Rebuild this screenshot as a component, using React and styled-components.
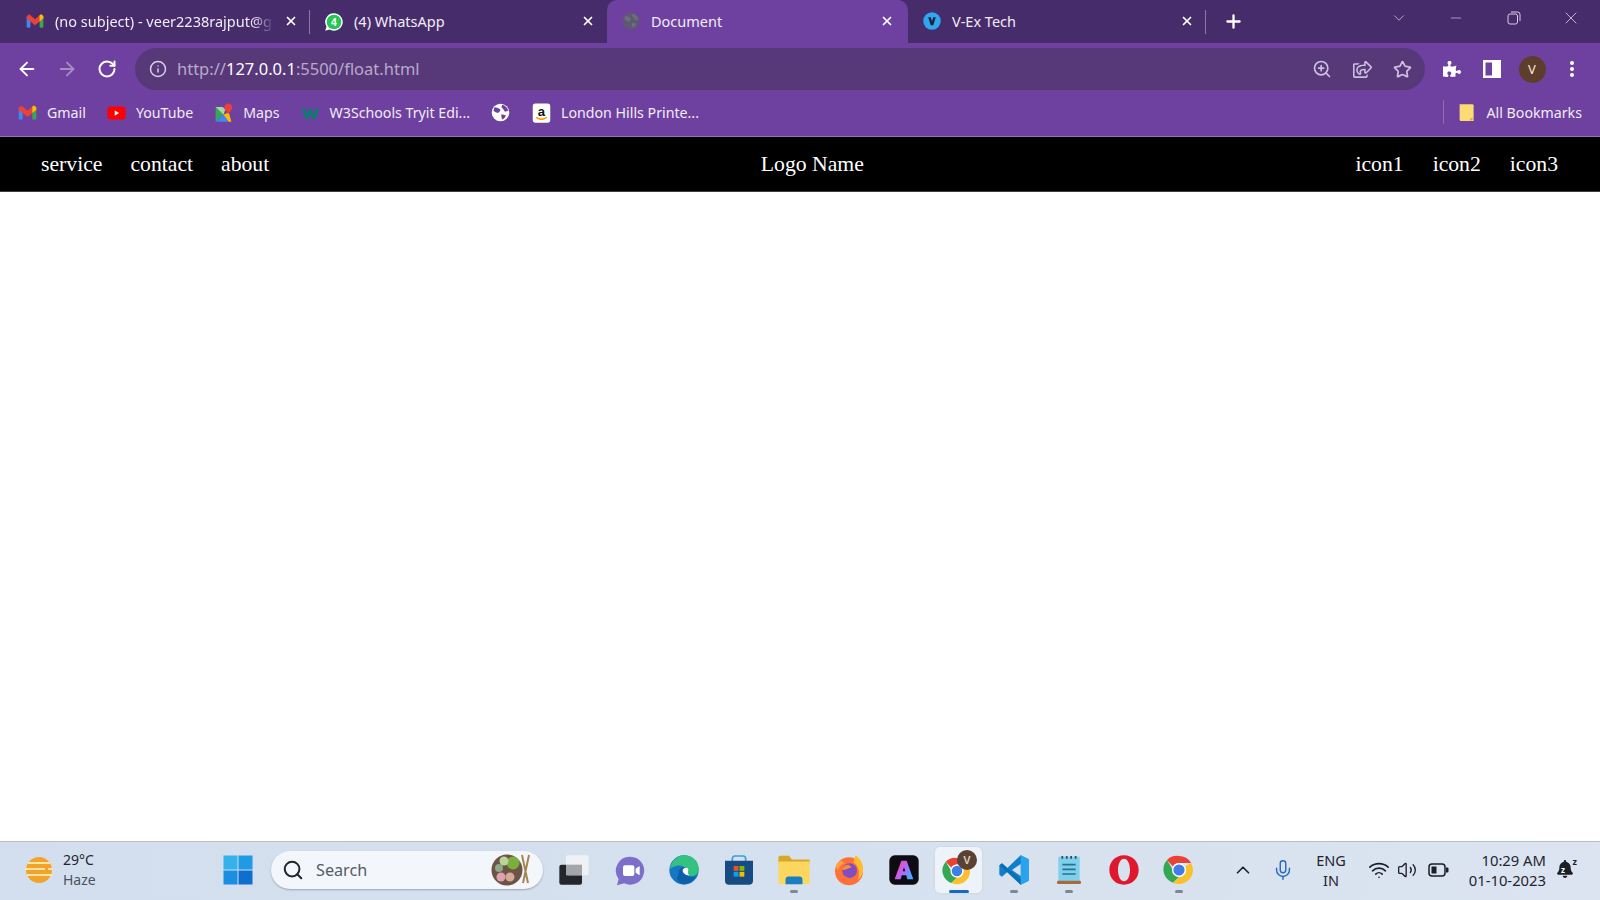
import React from 'react'
import styled, { createGlobalStyle } from 'styled-components'
import { ArrowLeft, ArrowRight, RotateCw, Info, ZoomIn, Star, Plus, X, Minus, ChevronDown, ChevronUp, Search, Mic, Wifi, Volume2 } from 'lucide-react'
import { FaPuzzlePiece, FaRegShareSquare, FaBell } from 'react-icons/fa'

const GlobalStyle = createGlobalStyle`
  html, body { margin: 0; padding: 0; background: #fff; }
  body { font-family: "Noto Sans", "Liberation Sans", sans-serif; }
`

const Screen = styled.div`
  width: 1600px;
  height: 900px;
  display: flex;
  flex-direction: column;
  overflow: hidden;
`

/* browser chrome */
const TabStrip = styled.div`
  height: 43px;
  background: #472c6b;
  display: flex;
  align-items: stretch;
  padding-left: 11px;
`
const Tab = styled.div`
  position: relative;
  width: ${p => p.$w}px;
  box-sizing: border-box;
  padding: 0 ${p => (p.$active ? 14 : 12)}px 1px 14px;
  display: flex;
  align-items: center;
  gap: 10px;
  color: #f1ecf6;
  background: ${p => (p.$active ? '#6e41a0' : 'transparent')};
  border-radius: ${p => (p.$active ? '10px 10px 0 0' : '0')};
  font-size: 14.5px;
  &::after {
    content: '';
    display: ${p => (p.$sep ? 'block' : 'none')};
    position: absolute;
    right: 0;
    top: 10px;
    height: 24px;
    width: 1px;
    background: #8d78a9;
  }
`
const TabIcon = styled.span`
  width: 20px;
  height: 20px;
  flex: none;
  display: flex;
`
const TabTitle = styled.span`
  flex: 1;
  overflow: hidden;
  white-space: nowrap;
  padding-bottom: 1px;
  ${p => p.$fade && 'mask-image: linear-gradient(to right, #000 90%, transparent 100%);'}
`
const TabClose = styled(X)`
  width: 14px;
  height: 14px;
  flex: none;
  stroke-width: 3;
  color: #fff;
`
const NewTab = styled(Plus)`
  width: 21px;
  height: 21px;
  margin-left: 17px;
  align-self: center;
  color: #fff;
  stroke-width: 2.6;
`
const WindowControls = styled.div`
  margin-left: auto;
  display: flex;
  align-items: center;
  height: 36px;
`
const WindowButton = styled.div`
  width: 57.5px;
  display: flex;
  justify-content: center;
  color: #d8cfe5;
`

const Toolbar = styled.div`
  height: 47px;
  background: #6e41a0;
  display: flex;
  align-items: flex-end;
`
const NavButtons = styled.div`
  display: flex;
  align-items: center;
  height: 42px;
  width: 135px;
  padding-left: 7px;
  box-sizing: border-box;
`
const NavButton = styled.div`
  width: 40px;
  display: flex;
  justify-content: center;
  color: ${p => (p.$dim ? '#a68cc4' : '#fff')};
`
const Omnibox = styled.div`
  width: 1290px;
  height: 42px;
  border-radius: 21px;
  background: #573878;
  display: flex;
  align-items: center;
  padding: 0 3px 0 14px;
  box-sizing: border-box;
  color: #d9cfe6;
`
const Url = styled.div`
  margin-left: 10px;
  padding-bottom: 2px;
  flex: 1;
  font-size: 16.5px;
  color: #b9a9cd;
  b { font-weight: 400; color: #fff; }
`
const OmniIcon = styled.div`
  width: 40px;
  display: flex;
  justify-content: center;
  color: #cdbfdf;
`
const ToolIcons = styled.div`
  flex: 1;
  height: 42px;
  display: flex;
  align-items: center;
  padding-left: 7px;
  color: #fff;
`
const ToolIcon = styled.div`
  width: 40px;
  display: flex;
  justify-content: center;
  align-items: center;
`
const Avatar = styled.div`
  width: 27px;
  height: 27px;
  border-radius: 50%;
  background: #5e3d2c;
  color: #f3e9dc;
  font-size: 13px;
  display: flex;
  align-items: center;
  justify-content: center;
`

const Bookmarks = styled.div`
  height: 46px;
  background: #6e41a0;
  border-bottom: 1px solid #9178b3;
  box-sizing: content-box;
  display: flex;
  align-items: center;
  padding: 0 0 0 17px;
  color: #f1ecf6;
  font-size: 14.2px;
`
const Mark = styled.div`
  display: flex;
  align-items: center;
  gap: 9px;
  margin-right: 20px;
  padding-bottom: 2px;
  white-space: nowrap;
`
const MarkIcon = styled.span`
  width: 21px;
  height: 21px;
  display: flex;
  flex: none;
`
const AllMarks = styled.div`
  margin-left: auto;
  margin-right: 18px;
  margin-bottom: 2px;
  display: flex;
  align-items: center;
  gap: 9px;
  height: 24px;
  padding-left: 13px;
  border-left: 1px solid #8d6fb0;
`

/* the page itself */
const PageNav = styled.nav`
  height: 55px;
  box-sizing: border-box;
  background: #000;
  border-bottom: 1px solid #3c3c3c;
  color: #fff;
  display: flex;
  align-items: center;
  justify-content: space-between;
  padding: 0 42px 0 41px;
  font-family: "Liberation Serif", "Times New Roman", serif;
  font-size: 21.7px;
`
const NavGroup = styled.div`
  display: flex;
  gap: ${p => p.$gap}px;
`
const Blank = styled.main`
  flex: 1;
  background: #fff;
`

/* windows taskbar */
const Taskbar = styled.footer`
  height: 58px;
  box-sizing: content-box;
  border-top: 1px solid #b6bdc6;
  background: linear-gradient(90deg, #d3deee, #d6e1ef 50%, #dbe4f0);
  display: flex;
  align-items: center;
  color: #1f2530;
`
const TaskRow = styled.div`
  display: flex;
  align-items: center;
  width: 100%;
  padding-bottom: 2px;
`
const Weather = styled.div`
  width: 210px;
  box-sizing: border-box;
  padding-left: 24px;
  display: flex;
  align-items: center;
  gap: 9px;
`
const WeatherText = styled.div`
  font-size: 14px;
  line-height: 20px;
  span { display: block; color: #4b525e; }
`
const Tile = styled.div`
  position: relative;
  width: 47px;
  height: 46px;
  margin: 0 4px;
  border-radius: 5px;
  display: flex;
  align-items: center;
  justify-content: center;
  background: ${p => (p.$active ? '#eef3f9' : 'transparent')};
  box-shadow: ${p => (p.$active ? '0 0 2px #c4ccd8' : 'none')};
  &::after {
    content: '';
    display: ${p => (p.$run || p.$active ? 'block' : 'none')};
    position: absolute;
    left: 50%;
    bottom: 0;
    transform: translateX(-50%);
    width: ${p => (p.$active ? 20 : 8)}px;
    height: 3px;
    border-radius: 2px;
    background: ${p => (p.$active ? '#1668c5' : '#7f8791')};
  }
`
const SearchBox = styled.div`
  width: 272px;
  height: 38px;
  margin: 0 3px 0 6px;
  border-radius: 19px;
  background: #f3f6fa;
  box-shadow: 0 1px 2px #9aa6b6;
  box-sizing: border-box;
  padding: 0 10px 0 11px;
  display: flex;
  align-items: center;
  gap: 12px;
  font-size: 16.2px;
  color: #555c66;
  span { flex: 1; }
`
const Tray = styled.div`
  margin-left: auto;
  display: flex;
  align-items: center;
  padding-right: 26px;
`
const TrayIcon = styled.div`
  width: ${p => p.$w}px;
  display: flex;
  justify-content: center;
  color: ${p => p.$color || '#1b1f27'};
`
const Lang = styled.div`
  width: 66px;
  text-align: center;
  font-size: 14.5px;
  line-height: 20px;
`
const Clock = styled.div`
  width: 90px;
  text-align: right;
  font-size: 14.8px;
  line-height: 20px;
`
const SnoozeBell = styled.div`
  position: relative;
  width: 18px;
  height: 20px;
  margin-left: 10px;
  color: #1b1f27;
  i {
    position: absolute;
    left: 5px;
    top: 5px;
    color: #fff;
    font-size: 8px;
    font-style: normal;
    font-weight: 700;
    line-height: 9px;
  }
  span {
    position: absolute;
    top: -3px;
    right: -3px;
    font-size: 9px;
    font-weight: 700;
    line-height: 10px;
  }
`

const Svg = ({ size = 20, children }) => (
  <svg width={size} height={size} viewBox="0 0 24 24">{children}</svg>
)

const GmailIcon = ({ size }) => (
  <Svg size={size}>
    <rect x="2" y="6" width="4.5" height="14" rx="1" fill="#4285f4" />
    <rect x="17.5" y="6" width="4.5" height="14" rx="1" fill="#34a853" />
    <path d="M2 6.500 5 4l7 6 7-6 3 2.500V9l-10 8L2 9z" fill="#ea4335" />
    <path d="M17.500 5.200 19.500 4 22 6v3l-4.500 3.600z" fill="#fbbc04" />
  </Svg>
)
const WhatsAppIcon = () => (
  <Svg size={22}>
    <path d="M12 1.500a10.500 10.500 0 1 1-5.300 19.600L1.500 22.500l1.500-5A10.500 10.500 0 0 1 12 1.500z" fill="#fff" />
    <circle cx="12" cy="12" r="8.800" fill="#25c654" />
    <text x="12" y="16.500" textAnchor="middle" fontSize="12.500" fontWeight="700" fill="#fff" fontFamily="Liberation Sans">4</text>
  </Svg>
)
const GlobeIcon = ({ bg, fg, size }) => (
  <Svg size={size}>
    <circle cx="12" cy="12" r="10" fill={bg} />
    <path d="M5 6c3 0 4 1 6 2s0 3-1 4-4 0-6-2zM14 3c3 1 6 3 7 7l-4 1-2-3-2-2zM13 14l5 1c0 2-2 4-4 5l-1-3z" fill={fg} />
  </Svg>
)
const VexIcon = () => (
  <Svg>
    <circle cx="12" cy="12" r="10.500" fill="#2fa6ee" />
    <path d="M7.500 7.500h3l1.500 5 1.500-5h3L13.500 17h-3z" fill="#16233a" />
  </Svg>
)
const YouTubeIcon = () => (
  <Svg size={22}>
    <rect x="1.500" y="4.500" width="21" height="15" rx="4" fill="#f00" />
    <path d="M10 9l5 3-5 3z" fill="#fff" />
  </Svg>
)
const MapsIcon = () => (
  <Svg size={22}>
    <path d="M3 5l9 9-9 8z" fill="#34a853" />
    <path d="M3 5h8l3 3-2 6z" fill="#a8d8a0" />
    <path d="M3 22l9-8 6 8z" fill="#4285f4" />
    <path d="M12 14l6-3 3 11h-3z" fill="#fbbc04" />
    <path d="M18 1c-3 0-5 2-5 5 0 2 3 5 4 7 2-2 5-5 5-7 0-3-2-5-4-5z" fill="#ea4335" />
  </Svg>
)
const W3Icon = () => (
  <Svg size={22}>
    <path d="M2 7h4l2 8 2.500-8h3l2.500 8 2-8h4l-4.500 12h-3L12 12l-2.500 7h-3z" fill="#04806a" />
  </Svg>
)
const AmazonIcon = () => (
  <Svg size={22}>
    <rect x="2" y="1" width="20" height="22" rx="3" fill="#fff" />
    <text x="12" y="15" textAnchor="middle" fontSize="15" fontWeight="700" fill="#111" fontFamily="Liberation Sans">a</text>
    <path d="M6 17c4 3 8 3 12 0" stroke="#f90" strokeWidth="1.800" fill="none" />
  </Svg>
)
const FolderMark = () => (
  <Svg size={22}>
    <path d="M3 2h15l1 1v18H4l-1-1z" fill="#fbdc74" />
    <path d="M15 21v-3h5z" fill="#d7a84c" />
  </Svg>
)
const ChromeParts = () => (
  <>
    <path d="M12 1.500a10.500 10.500 0 0 1 9.100 5.250H12a5.250 5.250 0 0 0-4.550 2.630L3 4.500A10.500 10.500 0 0 1 12 1.500z" fill="#ea4335" />
    <path d="M3 4.500l4.450 7.500A5.250 5.250 0 0 0 12 17.250L7.500 21.500A10.500 10.500 0 0 1 3 4.500z" fill="#34a853" />
    <path d="M21.100 6.750A10.500 10.500 0 0 1 7.500 21.500l4.500-4.250a5.250 5.250 0 0 0 4.550-7.880z" fill="#fbc02d" />
    <circle cx="12" cy="12" r="5.250" fill="#fff" />
    <circle cx="12" cy="12" r="4.200" fill="#3f7ee8" />
  </>
)
const ChromeIcon = () => <Svg size={32}><ChromeParts /></Svg>
const TaskView = () => (
  <Svg size={32}>
    <rect x="1" y="8" width="17" height="15" rx="1.500" fill="#24262b" />
    <rect x="6" y="1" width="17" height="15" rx="1.500" fill="#eef1f5" />
    <rect x="6" y="8" width="12" height="8" fill="#a4a7aa" />
  </Svg>
)
const TeamsIcon = () => (
  <Svg size={32}>
    <path d="M13 2a10.500 10.500 0 1 1-4.600 20L3 23.500l1.200-4.800A10.500 10.500 0 0 1 13 2z" fill="#7b6fc9" />
    <rect x="7.500" y="8.500" width="8.500" height="8" rx="1.500" fill="#fff" />
    <path d="M17 11l3-2v7l-3-2z" fill="#fff" />
  </Svg>
)
const EdgeIcon = () => (
  <Svg size={32}>
    <circle cx="12" cy="12" r="11" fill="#1678c4" />
    <path d="M1.500 11C3 4 8 1 12 1c6 0 11 4 11 10 0 4-3 5.500-5.500 5.500S13 15 14 12.500C13 9 8 6.500 1.500 11z" fill="#33c27f" />
    <path d="M8 14c0-3 3-5 6-3.500 1 .5-1 1-1 3 0 4 5 5 8 3-2 4-5.500 6-9 6-2 0-4-1-5-3s1-3 1-5.500z" fill="#0f5ea8" />
    <path d="M12.500 10.500c2-.5 3.500.5 2.500 2.500-.5 1 0 2 1 3-3 0-5-2-5-3.500 0-1 .5-1.700 1.500-2z" fill="#fff" />
  </Svg>
)
const StoreIcon = () => (
  <Svg size={32}>
    <path d="M7 6V3.500C7 2 8 1.500 9 1.500h6c1 0 2 .5 2 2V6" stroke="#3aa0d8" strokeWidth="1.300" fill="none" />
    <path d="M1.500 5h21v15c0 2-1 3-3 3h-15c-2 0-3-1-3-3z" fill="#174b82" />
    <rect x="8" y="9" width="3.600" height="3.600" fill="#f25022" />
    <rect x="12.400" y="9" width="3.600" height="3.600" fill="#7fba00" />
    <rect x="8" y="13.400" width="3.600" height="3.600" fill="#00a4ef" />
    <rect x="12.400" y="13.400" width="3.600" height="3.600" fill="#ffb900" />
  </Svg>
)
const FolderIcon = () => (
  <Svg size={34}>
    <path d="M1 3.500C1 2.500 1.500 2 2.500 2h6l2 2.500H23V8H1z" fill="#d9a625" />
    <path d="M1 6h22v16H1z" fill="#fcd75f" />
    <path d="M6 22v-3c0-2 1-2.500 2-2.500h8c1 0 2 .5 2 2.500v3z" fill="#1b7ec4" />
  </Svg>
)
const FirefoxIcon = () => (
  <Svg size={32}>
    <circle cx="12" cy="13" r="10.500" fill="#ff7139" />
    <path d="M17 1c4 3 6 7 5.500 12-.5 3-2 5-4 6.500 2-5 1-11-3-13C15.500 4.500 16 3 17 1z" fill="#ffbd2e" />
    <path d="M2 9c1-2 2.500-3.500 5-4 0 1 .5 1.500 2 2C5.500 8 4 10 4 13z" fill="#ffa436" />
    <circle cx="12.500" cy="12.500" r="5.500" fill="#7f4fc0" />
    <path d="M7 12c0-2 2-4 5-4 0 1 2 1 2 2l-3 1c-1 0-2 1-4 1z" fill="#ff8a3c" />
  </Svg>
)
const AdobeIcon = () => (
  <Svg size={32}>
    <defs>
      <linearGradient id="adobe" x1="0" y1="0" x2="1" y2="0.600">
        <stop offset="0" stopColor="#ff4d5e" />
        <stop offset="0.500" stopColor="#c85cf0" />
        <stop offset="1" stopColor="#4aa6ff" />
      </linearGradient>
    </defs>
    <rect x="1" y="1" width="22" height="22" rx="4" fill="#0d0b14" />
    <path d="M10 5h4l5 14h-4.500l-.8-3h-3.400l-.8 3H5zM12 10l-1 3h2z" fillRule="evenodd" fill="url(#adobe)" />
  </Svg>
)
const ChromeProfile = () => (
  <svg width="40" height="40" viewBox="0 0 40 40">
    <g transform="translate(3 6) scale(1.250)"><ChromeParts /></g>
    <circle cx="28" cy="10" r="10" fill="#5b4034" />
    <text x="28" y="14" textAnchor="middle" fontSize="11" fontWeight="700" fill="#d9c9bb" fontFamily="Liberation Sans">V</text>
  </svg>
)
const VsCodeIcon = () => (
  <Svg size={32}>
    <path d="M17 1l6 3v16l-6 3-10-9.500L3 17l-2-1.500V8.500L3 7l4 3.500z" fill="#0f7fcc" />
    <path d="M17 1l6 3v16l-6 3z" fill="#29a4ec" />
    <path d="M17 7.500 10.500 12l6.500 4.500z" fill="#d6e1ef" />
    <path d="M1 8.500 3 7l14 12v4z" fill="#0b68ad" opacity="0.700" />
  </Svg>
)
const NotepadIcon = () => (
  <Svg size={32}>
    <path d="M4 2h16v19H4z" fill="#7ed1ee" />
    <rect x="3" y="20" width="18" height="2.500" rx="1" fill="#a86a3c" />
    <path d="M7 1.500v2M10.300 1.500v2M13.600 1.500v2M17 1.500v2" stroke="#394a5a" strokeWidth="1.300" />
    <path d="M7 8h10M7 11.500h10M7 15h10" stroke="#2d6f8e" strokeWidth="1.200" />
  </Svg>
)
const OperaIcon = () => (
  <Svg size={32}>
    <path fillRule="evenodd" d="M12 1c6.500 0 11 5 11 11s-4.500 11-11 11S1 18 1 12 5.500 1 12 1zm0 2.500c-2.500 0-4.500 3.500-4.500 8.500s2 8.500 4.500 8.500 4.500-3.500 4.500-8.500-2-8.500-4.500-8.500z" fill="#e0182d" />
  </Svg>
)
const SunHaze = () => (
  <svg width="30" height="30" viewBox="0 0 30 30">
    <circle cx="15" cy="15" r="13" fill="#f3a32c" />
    <path d="M4 8h22M1 14h20M24 14h5M3 20h26" stroke="#fbe6a6" strokeWidth="2" />
  </svg>
)
const WindowsLogo = () => (
  <svg width="30" height="30" viewBox="0 0 30 30">
    <rect x="0.500" y="0.500" width="14" height="14" fill="#35b2ec" />
    <rect x="15.500" y="0.500" width="14" height="14" fill="#1f9ae4" />
    <rect x="0.500" y="15.500" width="14" height="14" fill="#1a8ee0" />
    <rect x="15.500" y="15.500" width="14" height="14" fill="#0f6fce" />
  </svg>
)
const FoodBowl = () => (
  <svg width="42" height="34" viewBox="0 0 42 34">
    <path d="M31 2l6 28M38 2l-6 28" stroke="#a58653" strokeWidth="2" />
    <circle cx="16" cy="17" r="15.500" fill="#6c5448" />
    <circle cx="22" cy="10" r="6.500" fill="#7cae3e" />
    <circle cx="13" cy="8" r="4.500" fill="#b9d69a" />
    <circle cx="8" cy="15" r="4" fill="#8ea888" />
    <circle cx="10" cy="24" r="4.500" fill="#e0a1ae" />
    <circle cx="19" cy="24" r="4.500" fill="#d7aa98" />
  </svg>
)
const RestoreIcon = () => (
  <svg width="14" height="14" viewBox="0 0 14 14" fill="none" stroke="currentColor">
    <rect x="1" y="3" width="9.500" height="10" rx="2" />
    <path d="M4 1h6.500A2.500 2.500 0 0 1 13 3.500V10" />
  </svg>
)
const SidePanel = () => (
  <svg width="18" height="18" viewBox="0 0 18 18">
    <path fillRule="evenodd" d="M0 0h18v18H0zM2.500 2.500v13H9v-13z" fill="#fff" />
  </svg>
)
const Dots = () => (
  <svg width="6" height="18" viewBox="0 0 6 18" fill="#fff">
    <circle cx="3" cy="3" r="2" /><circle cx="3" cy="9" r="2" /><circle cx="3" cy="15" r="2" />
  </svg>
)
const BatteryIcon = () => (
  <svg width="21" height="14" viewBox="0 0 21 14">
    <rect x="1" y="1" width="16" height="12" rx="3" fill="none" stroke="#1b1f27" strokeWidth="1.500" />
    <rect x="3.500" y="3.500" width="5" height="7" fill="#1b1f27" />
    <path d="M18 4.500h1.500a1 1 0 0 1 1 1v3a1 1 0 0 1-1 1H18z" fill="#1b1f27" />
  </svg>
)

const tabs = [
  { title: '(no subject) - veer2238rajput@g', w: 299, icon: <GmailIcon />, fade: true, sep: true },
  { title: '(4) WhatsApp', w: 297, icon: <WhatsAppIcon /> },
  { title: 'Document', w: 301, icon: <GlobeIcon bg="#5c5a6e" fg="#6e6c80" />, active: true },
  { title: 'V-Ex Tech', w: 298, icon: <VexIcon />, sep: true },
]
const marks = [
  { label: 'Gmail', icon: <GmailIcon size={21} /> },
  { label: 'YouTube', icon: <YouTubeIcon /> },
  { label: 'Maps', icon: <MapsIcon /> },
  { label: 'W3Schools Tryit Edi...', icon: <W3Icon /> },
  { label: '', icon: <GlobeIcon bg="#fff" fg="#6e41a0" size={21} /> },
  { label: 'London Hills Printe...', icon: <AmazonIcon /> },
]
const apps = [
  { icon: <TaskView /> },
  { icon: <TeamsIcon /> },
  { icon: <EdgeIcon /> },
  { icon: <StoreIcon /> },
  { icon: <FolderIcon />, run: true },
  { icon: <FirefoxIcon /> },
  { icon: <AdobeIcon /> },
  { icon: <ChromeProfile />, active: true },
  { icon: <VsCodeIcon />, run: true },
  { icon: <NotepadIcon />, run: true },
  { icon: <OperaIcon /> },
  { icon: <ChromeIcon />, run: true },
]

export default function App() {
  return (
    <Screen>
      <GlobalStyle />
      <TabStrip>
        {tabs.map(tab => (
          <Tab key={tab.title} $w={tab.w} $active={tab.active} $sep={tab.sep}>
            <TabIcon>{tab.icon}</TabIcon>
            <TabTitle $fade={tab.fade}>{tab.title}</TabTitle>
            <TabClose />
          </Tab>
        ))}
        <NewTab />
        <WindowControls>
          <WindowButton><ChevronDown size={18} strokeWidth={1} /></WindowButton>
          <WindowButton><Minus size={16} strokeWidth={1} /></WindowButton>
          <WindowButton><RestoreIcon /></WindowButton>
          <WindowButton><X size={20} strokeWidth={1} /></WindowButton>
        </WindowControls>
      </TabStrip>

      <Toolbar>
        <NavButtons>
          <NavButton><ArrowLeft size={22} /></NavButton>
          <NavButton $dim><ArrowRight size={22} /></NavButton>
          <NavButton><RotateCw size={20} strokeWidth={2.4} /></NavButton>
        </NavButtons>
        <Omnibox>
          <Info size={18} />
          <Url>http://<b>127.0.0.1</b>:5500/float.html</Url>
          <OmniIcon><ZoomIn size={20} /></OmniIcon>
          <OmniIcon><FaRegShareSquare size={19} /></OmniIcon>
          <OmniIcon><Star size={19} strokeWidth={2.2} /></OmniIcon>
        </Omnibox>
        <ToolIcons>
          <ToolIcon><FaPuzzlePiece size={18} /></ToolIcon>
          <ToolIcon><SidePanel /></ToolIcon>
          <ToolIcon><Avatar>V</Avatar></ToolIcon>
          <ToolIcon><Dots /></ToolIcon>
        </ToolIcons>
      </Toolbar>

      <Bookmarks>
        {marks.map((mark, i) => (
          <Mark key={i}>
            <MarkIcon>{mark.icon}</MarkIcon>
            {mark.label && <span>{mark.label}</span>}
          </Mark>
        ))}
        <AllMarks>
          <MarkIcon><FolderMark /></MarkIcon>
          <span>All Bookmarks</span>
        </AllMarks>
      </Bookmarks>

      <PageNav>
        <NavGroup $gap={28}>
          <span>service</span>
          <span>contact</span>
          <span>about</span>
        </NavGroup>
        <span>Logo Name</span>
        <NavGroup $gap={29}>
          <span>icon1</span>
          <span>icon2</span>
          <span>icon3</span>
        </NavGroup>
      </PageNav>

      <Blank />

      <Taskbar>
        <TaskRow>
          <Weather>
            <SunHaze />
            <WeatherText>29°C<span>Haze</span></WeatherText>
          </Weather>
          <Tile><WindowsLogo /></Tile>
          <SearchBox>
            <Search size={22} strokeWidth={2.2} color="#20242b" />
            <span>Search</span>
            <FoodBowl />
          </SearchBox>
          {apps.map((app, i) => (
            <Tile key={i} $run={app.run} $active={app.active}>{app.icon}</Tile>
          ))}
          <Tray>
            <TrayIcon $w={50}><ChevronUp size={22} strokeWidth={1.8} /></TrayIcon>
            <TrayIcon $w={30} $color="#2a6cc0"><Mic size={22} strokeWidth={1.6} /></TrayIcon>
            <Lang>ENG<br />IN</Lang>
            <TrayIcon $w={30}><Wifi size={22} strokeWidth={1.8} /></TrayIcon>
            <TrayIcon $w={26}><Volume2 size={20} strokeWidth={1.6} /></TrayIcon>
            <TrayIcon $w={36}><BatteryIcon /></TrayIcon>
            <Clock>10:29 AM<br />01-10-2023</Clock>
            <SnoozeBell><FaBell size={18} /><i>z</i><span>z</span></SnoozeBell>
          </Tray>
        </TaskRow>
      </Taskbar>
    </Screen>
  )
}
